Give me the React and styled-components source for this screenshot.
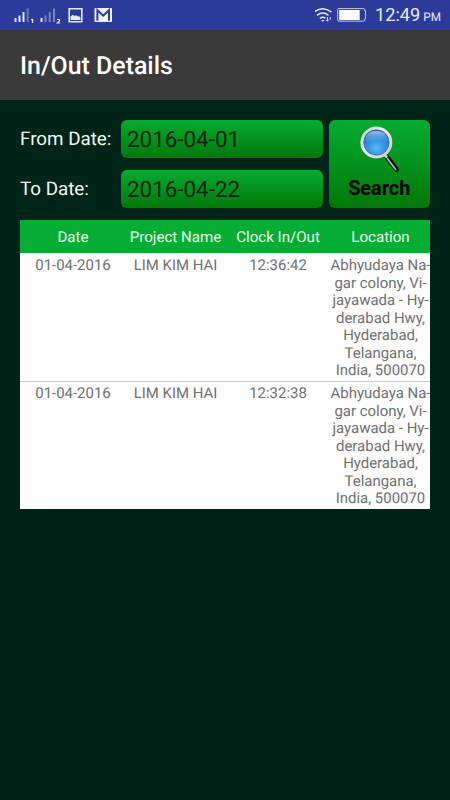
import React from "react";
import styled, { createGlobalStyle } from "styled-components";

const GlobalStyle = createGlobalStyle`
  * { box-sizing: border-box; }
  body { margin: 0; background: #002417; }
`;

const Screen = styled.div`
  width: 450px;
  height: 800px;
  overflow: hidden;
  display: flex;
  flex-direction: column;
  background: #002417;
  font-family: Roboto, "Liberation Sans", sans-serif;
  text-rendering: geometricPrecision;
`;

const StatusBar = styled.header`
  height: 30px;
  flex: none;
  display: flex;
  justify-content: space-between;
  background: #2c3b99;
  color: #e6eafa;
`;

const StatusIcons = styled.svg`
  display: block;
  width: ${(p) => p.$width}px;
  height: 30px;
`;

const StatusRight = styled.div`
  display: flex;
  padding-right: 10px;
`;

const Clock = styled.div`
  width: 65px;
  margin-left: 5px;
  font-size: 18.2px;
  line-height: 32px;
  white-space: nowrap;
`;

const Meridiem = styled.span`
  margin-left: 3px;
  font-size: 11.8px;
`;

const TitleBar = styled.div`
  height: 70px;
  flex: none;
  display: flex;
  align-items: center;
  padding: 3px 20px 0;
  background: #3a3a3a;
  box-shadow: inset 0 1px 0 #34363f;
`;

const Title = styled.h1`
  margin: 0;
  font-size: 24.9px;
  font-weight: 500;
  color: #fff;
`;

const Content = styled.main`
  padding: 20px;
`;

const Filters = styled.form`
  display: grid;
  grid-template-columns: 100.5px 202px 101.5px;
  grid-template-rows: 38px 38px;
  row-gap: 12px;
  margin-bottom: 12px;
`;

const Label = styled.label`
  font-size: 18.8px;
  line-height: 39px;
  color: #f2f7f4;
  white-space: nowrap;
`;

const DateField = styled.div`
  padding-left: 6.5px;
  border-radius: 6px;
  background: linear-gradient(#06ab32, #027808);
  font-size: 22.4px;
  line-height: 40px;
  color: #04240c;
`;

const SearchButton = styled.button`
  grid-column: 3;
  grid-row: 1 / 3;
  display: flex;
  flex-direction: column;
  align-items: center;
  height: 87.5px;
  margin-left: 6px;
  margin-right: -6px;
  padding: 5px 0 0;
  border: 0;
  border-radius: 6px;
  background: linear-gradient(#06ab32, #027808);
  font-family: inherit;
  font-size: 19.9px;
  font-weight: 700;
  line-height: 28px;
  color: #000;
`;

const Magnifier = styled.svg`
  display: block;
  width: 50px;
  height: 50px;
`;

const Table = styled.section`
  background: #fdfdfd;
`;

const Row = styled.div`
  display: grid;
  grid-template-columns: repeat(4, 102.5px);
  height: ${(p) => (p.$head ? 33 : 128)}px;
  padding: ${(p) => (p.$head ? "9px" : p.$divided ? "3.4px" : "4px")} 0 0 1.75px;
  overflow: hidden;
  background: ${(p) => (p.$head ? "#06ad35" : "transparent")};
  color: ${(p) => (p.$head ? "#ecfbea" : "#707070")};
  border-top: ${(p) => (p.$divided ? "1px solid #cacaca" : "0")};
`;

const Cell = styled.div`
  font-size: ${(p) => (p.$head ? 15.1 : 14.95)}px;
  line-height: 17.5px;
  text-align: center;
  white-space: pre;
`;

const columns = ["Date", "Project Name", "Clock In/Out", "Location"];
const address =
  "Abhyudaya Na-\ngar colony, Vi-\njayawada - Hy-\nderabad Hwy,\nHyderabad,\nTelangana,\nIndia, 500070";
const records = [
  ["01-04-2016", "LIM KIM HAI", "12:36:42", address],
  ["01-04-2016", "LIM KIM HAI", "12:32:38", address],
];

function SignalIcons() {
  return (
    <StatusIcons $width={120} viewBox="0 0 120 30" fill="#e6eafa">
      <path d="M14.5 18h2v4h-2zM18.5 15.5h2V22h-2zM22.5 12h2v10h-2z" />
      <path d="M26.7 8.5h2V22h-2z" opacity=".35" />
      <path d="M32.5 19v4M31.3 20l1.2-1" fill="none" stroke="#e6eafa" strokeWidth="1.3" />
      <path d="M40.5 18h2v4h-2z" />
      <path d="M44.5 15.5h2V22h-2zM48.7 12h2v10h-2zM53 8.5h2V22h-2z" opacity=".42" />
      <path d="M57 19.5h2.5v1.4L57.3 23h2.9" fill="none" stroke="#e6eafa" strokeWidth="1.1" />
      <path d="M69.2 8.7h12.6v13.1H69.2z" fill="none" stroke="#e6eafa" strokeWidth="1.6" />
      <path d="M70.5 20v-3.5l2.2-1.8 1.9 1.3 1.8-.7 1.4 1.2 1.3-.2 1.3 1.2V20z" />
      <rect x="94.5" y="8" width="17.5" height="14" rx="1" fill="#f1f3fd" />
      <path d="M97.4 20.8V10.2l5.8 5.5 5.8-5.5v10.6" fill="none" stroke="#303d92" strokeWidth="2" />
    </StatusIcons>
  );
}

function ConnectionIcons() {
  return (
    <StatusIcons $width={55} viewBox="0 0 55 30" fill="none" stroke="#e6eafa">
      <path d="M-1 12.2q8.7-7 17.5 0M2 15.3q5.8-4.4 11.5 0M4.9 18.3q3-2.2 5.5-.2" strokeWidth="1.5" />
      <path d="m6.1 20 1.7 2 1.6-2z" fill="#e6eafa" stroke="none" />
      <path d="M12.4 17v4m-1.2-1.2 1.2 1.4 1.2-1.4M15.2 20v-3" strokeWidth=".9" />
      <path d="M23.7 8.6h25q1 0 1 1v1.2h.8v8h-.8v1.4q0 1-1 1h-25q-1 0-1-1V9.6q0-1 1-1z" strokeWidth="1" strokeOpacity=".8" />
      <path d="M24.2 10h20.5v10H24.2z" fill="#fff" stroke="none" />
    </StatusIcons>
  );
}

function SearchIcon() {
  return (
    <Magnifier viewBox="0 0 50 50">
      <defs>
        <radialGradient id="glass" cx=".5" cy=".72" r=".7">
          <stop offset="0" stopColor="#5ab9f3" />
          <stop offset=".45" stopColor="#3596e5" />
          <stop offset="1" stopColor="#2468bd" />
        </radialGradient>
        <linearGradient id="rim" x1="0" y1="0" x2="1" y2="1">
          <stop offset="0" stopColor="#c0cbbf" />
          <stop offset=".4" stopColor="#f1f2ec" />
          <stop offset="1" stopColor="#c4ccc4" />
        </linearGradient>
        <linearGradient id="gloss" x1="0" y1="0" x2="0" y2="1">
          <stop offset="0" stopColor="#b5dcfa" stopOpacity=".75" />
          <stop offset="1" stopColor="#6bb2ee" stopOpacity=".1" />
        </linearGradient>
      </defs>
      <circle cx="22.8" cy="18.5" r="15.8" fill="#08752b" opacity=".6" />
      <path d="m31.2 31.5 2.6-2.4 11.3 15.3q-.4 3-3.4 2.9L31 33.8z" fill="#222824" />
      <path d="m33.2 33.2 8.7 11.5" stroke="#b9bfba" strokeWidth="1.5" />
      <path d="m35 32 8.7 11.8" stroke="#060807" strokeWidth="1.6" />
      <path d="m30.5 29.5 2.5 3" stroke="#d8ded7" strokeWidth="2.5" />
      <circle cx="22.4" cy="17.5" r="14.4" fill="#2d7fd2" stroke="url(#rim)" strokeWidth="3.2" />
      <circle cx="22.4" cy="17.5" r="12.7" fill="url(#glass)" stroke="#446c90" strokeWidth=".6" />
      <path d="M11.2 17q0-11 11.2-11t11.2 11q-4-3.2-11.2-2.3-6 .8-11.2 2.3z" fill="url(#gloss)" />
    </Magnifier>
  );
}

export default function App() {
  return (
    <>
      <GlobalStyle />
      <Screen>
        <StatusBar>
          <SignalIcons />
          <StatusRight>
            <ConnectionIcons />
            <Clock>12:49<Meridiem>PM</Meridiem></Clock>
          </StatusRight>
        </StatusBar>
        <TitleBar><Title>In/Out Details</Title></TitleBar>
        <Content>
          <Filters>
            <Label>From Date:</Label>
            <DateField>2016-04-01</DateField>
            <SearchButton type="button">
              <SearchIcon />
              Search
            </SearchButton>
            <Label>To Date:</Label>
            <DateField>2016-04-22</DateField>
          </Filters>
          <Table>
            <Row $head>
              {columns.map((name) => <Cell $head key={name}>{name}</Cell>)}
            </Row>
            {records.map((record, i) => (
              <Row key={record[2]} $divided={i > 0}>
                {record.map((value, j) => <Cell key={columns[j]}>{value}</Cell>)}
              </Row>
            ))}
          </Table>
        </Content>
      </Screen>
    </>
  );
}
